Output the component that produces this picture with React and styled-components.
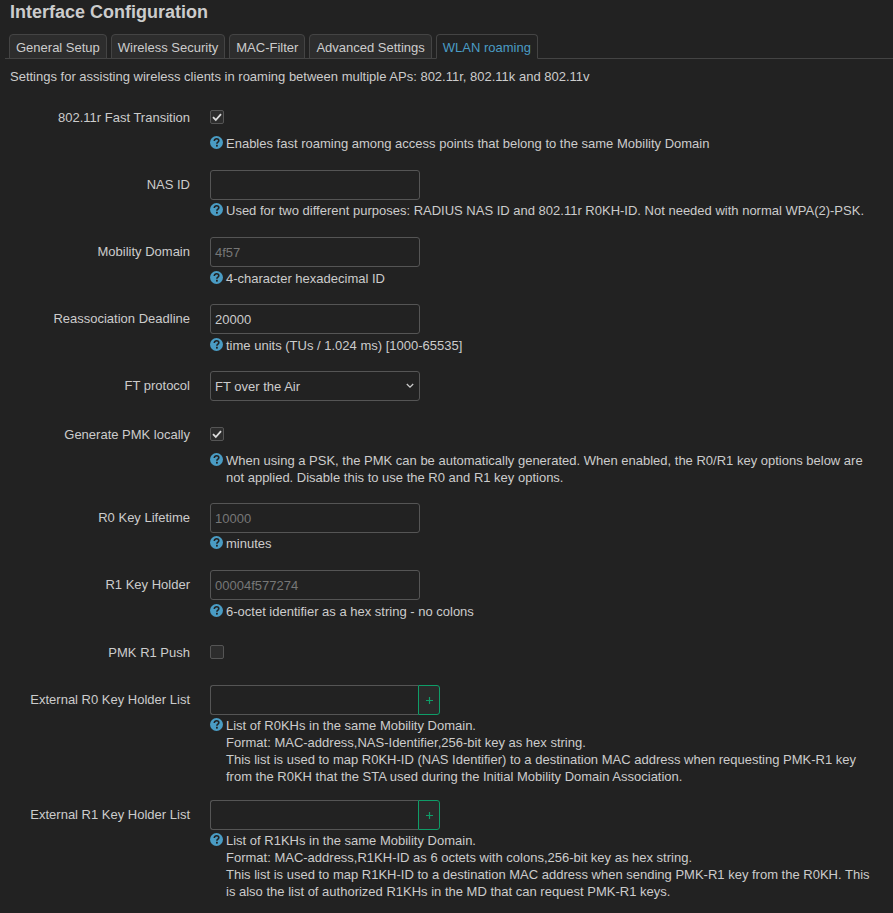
import React from 'react';
import styled, { createGlobalStyle } from 'styled-components';

const GlobalStyle = createGlobalStyle`
  html, body {
    margin: 0;
    padding: 0;
    background: #222;
  }
  body {
    font-family: "Liberation Sans", Arial, sans-serif;
    font-size: 13px;
    line-height: 17px;
    color: #ccc;
  }
`;

const Page = styled.div`
  width: 893px;
  height: 913px;
  overflow: hidden;
  padding: 0 10px;
  box-sizing: border-box;
`;

const Title = styled.h3`
  margin: 0;
  padding-top: 1px;
  height: 34px;
  box-sizing: border-box;
  font-size: 18px;
  line-height: 22px;
  font-weight: 700;
  color: #ccc;
`;

const TabBar = styled.ul`
  display: flex;
  margin: 0 -10px 0 -5px;
  padding: 0 0 0 4px;
  list-style: none;
  height: 25px;
  box-sizing: border-box;
  gap: 4px;
  border-bottom: 1px solid #444;
`;

const Tab = styled.li`
  height: 25px;
  box-sizing: border-box;
  padding: 4px 6px 0;
  border: 1px solid #444;
  border-bottom: ${(p) => (p.$active ? '1px solid #222' : '1px solid #444')};
  border-radius: 4px 4px 0 0;
  background: ${(p) => (p.$active ? '#222' : '#2d2d2d')};
  color: ${(p) => (p.$active ? '#4a9cc4' : '#ccc')};
  white-space: nowrap;
`;

const Intro = styled.p`
  margin: 9px 0 0;
  height: 42px;
`;

const Row = styled.div`
  display: grid;
  grid-template-columns: 180px 1fr;
  column-gap: 20px;
  margin-bottom: ${(p) => p.$gap}px;
`;

const Label = styled.label`
  text-align: right;
  padding-top: ${(p) => (p.$check ? '0' : '6px')};
  margin-top: ${(p) => (p.$check ? '-1px' : '0')};
  white-space: nowrap;
`;

const Field = styled.div`
  display: flex;
  flex-direction: column;
  align-items: flex-start;
`;

const Box = styled.span`
  display: flex;
  align-items: center;
  justify-content: center;
  width: 14px;
  height: 14px;
  box-sizing: border-box;
  border: 1px solid #555;
  border-radius: 2px;
  background: #2d2d2d;
`;

const TextInput = styled.div`
  width: 210px;
  height: 30px;
  box-sizing: border-box;
  padding: 6px 4px;
  border: 1px solid #555;
  border-radius: 3px;
  background: #222;
  color: ${(p) => (p.$placeholder ? '#777' : '#ccc')};
`;

const SelectBox = styled(TextInput)`
  display: flex;
  align-items: center;
  justify-content: space-between;
  padding-right: 5px;
`;

const DynList = styled.div`
  display: flex;
  width: 230px;
  height: 30px;
`;

const DynInput = styled.div`
  width: 208px;
  box-sizing: border-box;
  border: 1px solid #555;
  border-right: none;
  border-radius: 3px 0 0 3px;
`;

const AddButton = styled.div`
  width: 22px;
  box-sizing: border-box;
  display: flex;
  align-items: center;
  justify-content: center;
  border: 1px solid #0f9d68;
  border-radius: 0 3px 3px 0;
  background: #2a2a2a;
`;

const Help = styled.div`
  position: relative;
  padding-left: 16px;
  margin-top: ${(p) => p.$top}px;
  width: 650px;
  white-space: pre-line;
`;

const HelpIcon = styled.svg`
  position: absolute;
  left: 0;
  top: 1px;
  width: 13px;
  height: 13px;
`;

const Info = () => (
  <HelpIcon viewBox="0 0 13 13">
    <circle cx="6.5" cy="6.5" r="6.5" fill="#4a9cc4" />
    <path d="M4.3 5 C4.3 3.6 5.3 2.8 6.6 2.8 C7.9 2.8 8.8 3.6 8.8 4.7 C8.8 6.2 6.9 6.2 6.9 7.8" fill="none" stroke="#222" strokeWidth="1.6" />
    <rect x="6" y="8.8" width="1.8" height="1.8" fill="#222" />
  </HelpIcon>
);

const Check = () => (
  <svg width="10" height="10" viewBox="0 0 10 10">
    <path d="M1 5.2 L3.8 8 L9 2.2" fill="none" stroke="#ddd" strokeWidth="1.8" />
  </svg>
);

const Chevron = () => (
  <svg width="8" height="6" viewBox="0 0 8 6">
    <path d="M0.8 1 L4 4.2 L7.2 1" fill="none" stroke="#ccc" strokeWidth="1.3" />
  </svg>
);

const Plus = () => (
  <svg width="7" height="7" viewBox="0 0 7 7">
    <path d="M3.5 0 V7 M0 3.5 H7" stroke="#0f9d68" strokeWidth="1.2" />
  </svg>
);

const tabs = ['General Setup', 'Wireless Security', 'MAC-Filter', 'Advanced Settings', 'WLAN roaming'];

const rows = [
  { label: '802.11r Fast Transition', kind: 'check', checked: true, top: 11, gap: 18,
    help: 'Enables fast roaming among access points that belong to the same Mobility Domain' },
  { label: 'NAS ID', kind: 'text', gap: 18, top: 2,
    help: 'Used for two different purposes: RADIUS NAS ID and 802.11r R0KH-ID. Not needed with normal WPA(2)-PSK.' },
  { label: 'Mobility Domain', kind: 'text', value: '4f57', placeholder: true, gap: 17, top: 3,
    help: '4-character hexadecimal ID' },
  { label: 'Reassociation Deadline', kind: 'text', value: '20000', gap: 17, top: 3,
    help: 'time units (TUs / 1.024 ms) [1000-65535]' },
  { label: 'FT protocol', kind: 'select', value: 'FT over the Air', gap: 26 },
  { label: 'Generate PMK locally', kind: 'check', checked: true, top: 11, gap: 17,
    help: 'When using a PSK, the PMK can be automatically generated. When enabled, the R0/R1 key options below are\nnot applied. Disable this to use the R0 and R1 key options.' },
  { label: 'R0 Key Lifetime', kind: 'text', value: '10000', placeholder: true, gap: 18, top: 2,
    help: 'minutes' },
  { label: 'R1 Key Holder', kind: 'text', value: '00004f577274', placeholder: true, gap: 25, top: 3,
    help: '6-octet identifier as a hex string - no colons' },
  { label: 'PMK R1 Push', kind: 'check', gap: 24 },
  { label: 'External R0 Key Holder List', kind: 'list', gap: 15, top: 2,
    help: 'List of R0KHs in the same Mobility Domain.\nFormat: MAC-address,NAS-Identifier,256-bit key as hex string.\nThis list is used to map R0KH-ID (NAS Identifier) to a destination MAC address when requesting PMK-R1 key\nfrom the R0KH that the STA used during the Initial Mobility Domain Association.' },
  { label: 'External R1 Key Holder List', kind: 'list', gap: 0, top: 2,
    help: 'List of R1KHs in the same Mobility Domain.\nFormat: MAC-address,R1KH-ID as 6 octets with colons,256-bit key as hex string.\nThis list is used to map R1KH-ID to a destination MAC address when sending PMK-R1 key from the R0KH. This\nis also the list of authorized R1KHs in the MD that can request PMK-R1 keys.' },
];

const Control = ({ row }) => {
  if (row.kind === 'check') return <Box>{row.checked && <Check />}</Box>;
  if (row.kind === 'select') {
    return (
      <SelectBox>
        {row.value}
        <Chevron />
      </SelectBox>
    );
  }
  if (row.kind === 'list') {
    return (
      <DynList>
        <DynInput />
        <AddButton><Plus /></AddButton>
      </DynList>
    );
  }
  return <TextInput $placeholder={row.placeholder}>{row.value}</TextInput>;
};

export default function App() {
  return (
    <Page>
      <GlobalStyle />
      <Title>Interface Configuration</Title>
      <TabBar>
        {tabs.map((t) => (
          <Tab key={t} $active={t === 'WLAN roaming'}>{t}</Tab>
        ))}
      </TabBar>
      <Intro>Settings for assisting wireless clients in roaming between multiple APs: 802.11r, 802.11k and 802.11v</Intro>
      {rows.map((row) => (
        <Row key={row.label} $gap={row.gap}>
          <Label $check={row.kind === 'check'}>{row.label}</Label>
          <Field>
            <Control row={row} />
            {row.help && (
              <Help $top={row.top}>
                <Info />
                {row.help}
              </Help>
            )}
          </Field>
        </Row>
      ))}
    </Page>
  );
}
